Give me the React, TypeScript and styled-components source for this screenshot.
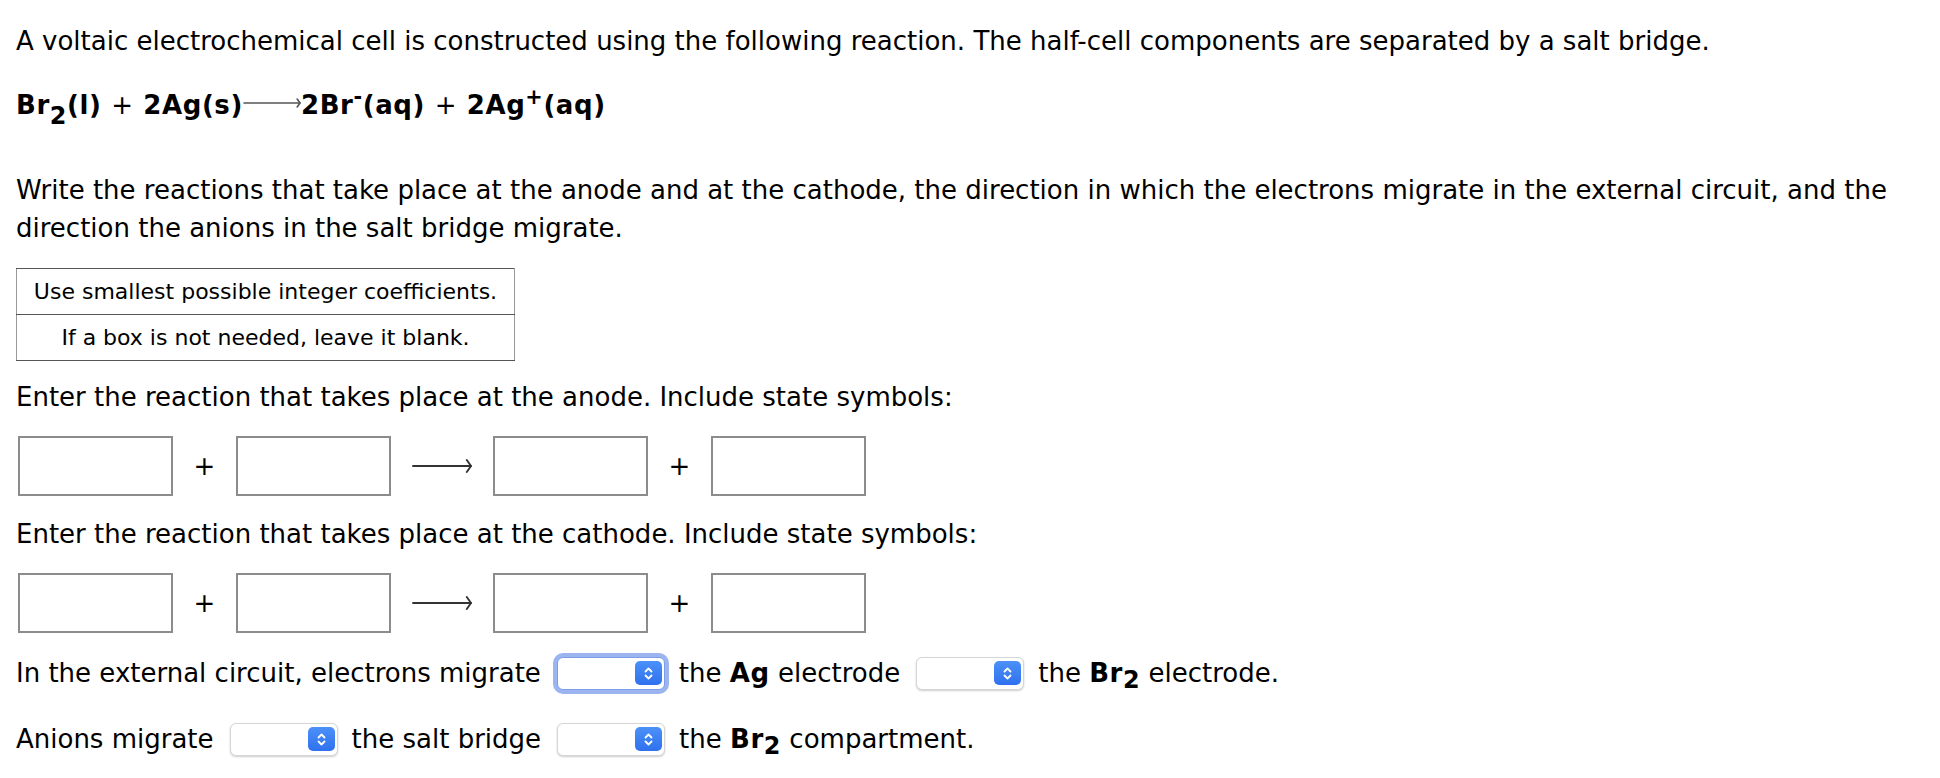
import React from 'react'
import styled, {createGlobalStyle} from 'styled-components'

const GlobalStyle = createGlobalStyle`
  html, body {
    margin: 0;
    background: #fff;
  }
  body {
    font-family: "DejaVu Sans", Verdana, sans-serif;
    color: #000;
  }
`

const Page = styled.div`
  padding: 22px 16px;
  font-size: 26px;
  line-height: 38px;
`

const Para = styled.p<{$mt: number}>`
  margin: ${({$mt}) => $mt}px 0 0;
`

const Equation = styled.p`
  margin: 26px 0 0;
  font-weight: bold;
  letter-spacing: 0.6px;
  white-space: nowrap;
`

const Op = styled.span`
  font-weight: normal;
`

const Strong = styled.b`
  letter-spacing: 0.6px;
`

const Sub = styled.sub<{$drop?: string}>`
  font-size: 0.92em;
  line-height: 0;
  vertical-align: ${({$drop}) => $drop || '-0.42em'};
`

const Sup = styled.sup`
  font-size: 0.8em;
  line-height: 0;
  vertical-align: 0.5em;
`

const ReactionArrow = styled.svg`
  vertical-align: 3px;
`

const NoteTable = styled.table`
  margin-top: 21px;
  border-collapse: collapse;
  width: 499px;
  font-size: 22px;
  line-height: normal;

  td {
    height: 45px;
    padding: 0 12px;
    text-align: center;
    white-space: nowrap;
    border-top: 1px solid #555;
    border-bottom: 1px solid #555;
    border-left: 1px solid #999;
    border-right: 1px solid #999;
  }
`

const BoxRow = styled.div`
  display: flex;
  align-items: center;
  margin-top: 20px;
  padding-left: 2px;
`

const AnswerBox = styled.input`
  box-sizing: border-box;
  width: 155px;
  height: 60px;
  margin: 0;
  padding: 0 8px;
  border: 2px solid #8c8c8c;
  border-radius: 0;
  font: inherit;
  outline: none;
`

const Plus = styled.span`
  width: 63px;
  text-align: center;
`

const ArrowSlot = styled.span`
  width: 102px;
  display: flex;
  justify-content: center;
`

const ChoiceRow = styled.div<{$mt: number}>`
  display: flex;
  align-items: center;
  height: 38px;
  margin-top: ${({$mt}) => $mt}px;
  white-space: nowrap;
`

const SelectFrame = styled.span<{$focused?: boolean}>`
  display: inline-flex;
  align-items: center;
  flex-shrink: 0;
  box-sizing: border-box;
  width: 108px;
  height: 33px;
  margin: 0 14px 0 16px;
  padding-right: 2px;
  background: #fff;
  border: 1px solid ${({$focused}) => ($focused ? '#7c9ee9' : '#d6d6d6')};
  border-radius: 6px;
  box-shadow: ${({$focused}) =>
    $focused ? '0 0 0 4px #9cb5f1' : '0 1px 2px rgba(0, 0, 0, 0.2)'};
`

const NativeSelect = styled.select`
  flex: 1;
  min-width: 0;
  height: 100%;
  border: none;
  background: transparent;
  appearance: none;
  font: inherit;
  font-size: 16px;
  outline: none;
`

const Stepper = styled.span`
  flex-shrink: 0;
  width: 27px;
  height: 24px;
  border-radius: 5px;
  background: linear-gradient(#4b91f8, #2f71ee);
  display: flex;
  align-items: center;
  justify-content: center;
`

const Chevrons = () => (
  <svg width="11" height="17" viewBox="0 0 11 17" fill="none" stroke="#fff" strokeWidth="1.8"
       strokeLinecap="round" strokeLinejoin="round">
    <path d="M2.5 6.5 L5.5 3.5 L8.5 6.5"/>
    <path d="M2.5 10.5 L5.5 13.5 L8.5 10.5"/>
  </svg>
)

const Choice = ({focused}: {focused?: boolean}) => (
  <SelectFrame $focused={focused}>
    <NativeSelect defaultValue="">
      <option value=""></option>
      <option value="from">from</option>
      <option value="to">to</option>
      <option value="through">through</option>
    </NativeSelect>
    <Stepper><Chevrons/></Stepper>
  </SelectFrame>
)

const LongArrow = ({width, color, stroke, head}: {width: number, color: string, stroke: number, head: number}) => (
  <ReactionArrow width={width} height="16" viewBox={`0 0 ${width} 16`} fill="none" stroke={color}
                 strokeWidth={stroke} strokeLinecap="round" strokeLinejoin="round">
    <path d={`M1 8 H${width - 1}`}/>
    <path d={`M${width - 1 - head * 0.7} ${8 - head} L${width - 1} 8 L${width - 1 - head * 0.7} ${8 + head}`}/>
  </ReactionArrow>
)

const ReactionRow = () => (
  <BoxRow>
    <AnswerBox/>
    <Plus>+</Plus>
    <AnswerBox/>
    <ArrowSlot><LongArrow width={60} color="#333" stroke={1.9} head={6}/></ArrowSlot>
    <AnswerBox/>
    <Plus>+</Plus>
    <AnswerBox/>
  </BoxRow>
)

const App = () => (
  <>
    <GlobalStyle/>
    <Page>
      <Para $mt={0}>
        A voltaic electrochemical cell is constructed using the following reaction. The half-cell components are
        separated by a salt bridge.
      </Para>
      <Equation>
        Br<Sub>2</Sub>(l) <Op>+</Op> 2Ag(s)<LongArrow width={58} color="#555" stroke={1.6} head={4}/>2Br<Sup>-</Sup>(aq) <Op>+</Op> 2Ag<Sup>+</Sup>(aq)
      </Equation>
      <Para $mt={47}>
        Write the reactions that take place at the anode and at the cathode, the direction in which the electrons
        migrate in the external circuit, and the direction the anions in the salt bridge migrate.
      </Para>
      <NoteTable>
        <tbody>
          <tr><td>Use smallest possible integer coefficients.</td></tr>
          <tr><td>If a box is not needed, leave it blank.</td></tr>
        </tbody>
      </NoteTable>
      <Para $mt={17}>Enter the reaction that takes place at the anode. Include state symbols:</Para>
      <ReactionRow/>
      <Para $mt={19}>Enter the reaction that takes place at the cathode. Include state symbols:</Para>
      <ReactionRow/>
      <ChoiceRow $mt={21}>
        In the external circuit, electrons migrate
        <Choice focused/>
        the&nbsp;<Strong>Ag</Strong>&nbsp;electrode
        <Choice/>
        the&nbsp;<Strong>Br<Sub $drop="-0.25em">2</Sub></Strong>&nbsp;electrode.
      </ChoiceRow>
      <ChoiceRow $mt={28}>
        Anions migrate
        <Choice/>
        the salt bridge
        <Choice/>
        the&nbsp;<Strong>Br<Sub $drop="-0.25em">2</Sub></Strong>&nbsp;compartment.
      </ChoiceRow>
    </Page>
  </>
)

export default App
